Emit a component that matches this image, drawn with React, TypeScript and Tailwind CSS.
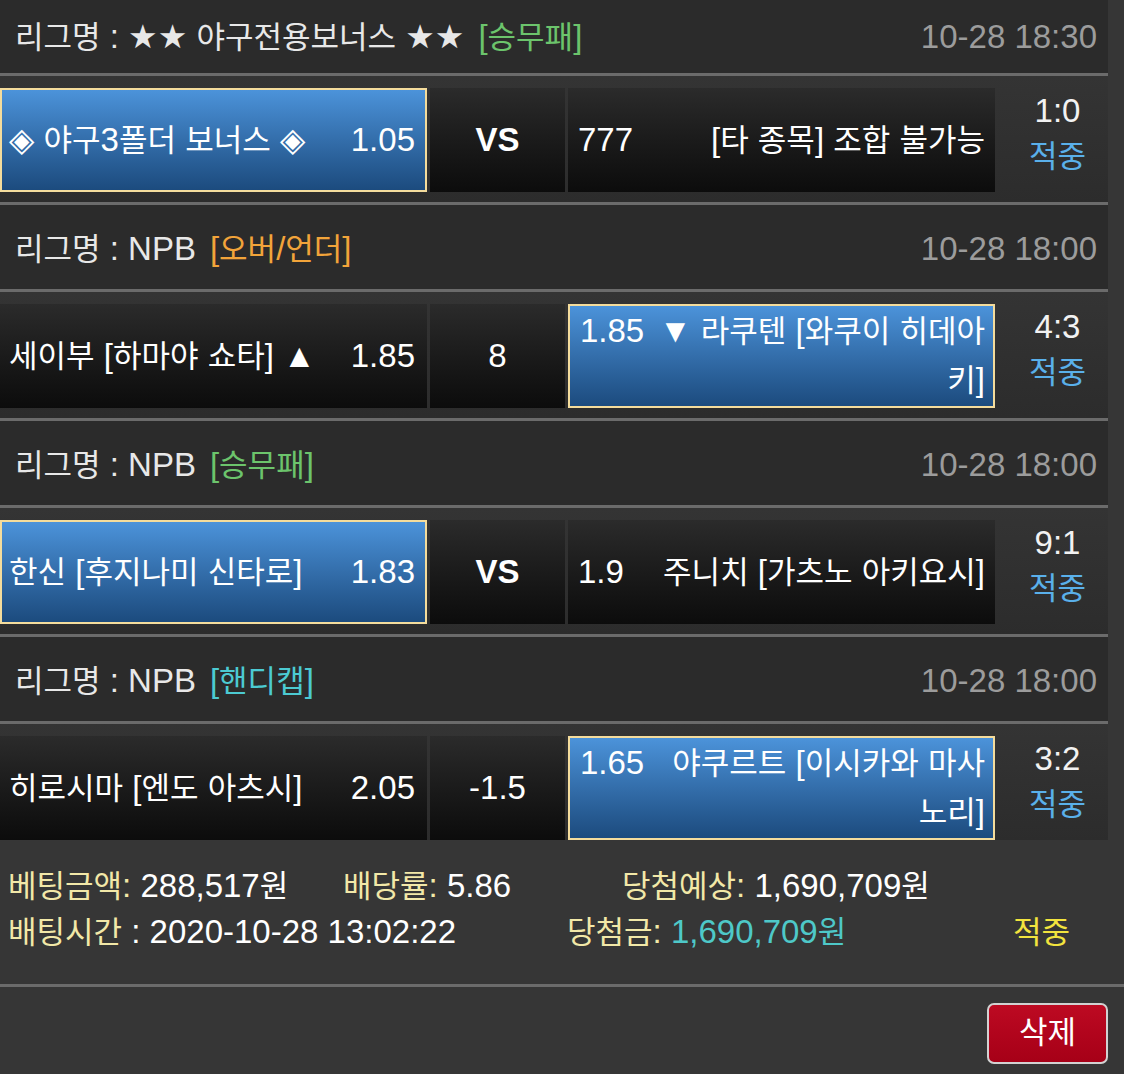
import React from 'react';

interface Game {
    league: string;
    tag: string;
    tagColor: string;
    date: string;
    home: string;
    homeOdds: string;
    mid: string;
    awayOdds: string;
    away: string[];
    pick: 'home' | 'away';
    score: string;
}

const games: Game[] = [
    {
        league: '★★ 야구전용보너스 ★★',
        tag: '[승무패]',
        tagColor: 'text-[#6cc46c]',
        date: '10-28 18:30',
        home: '◈ 야구3폴더 보너스 ◈',
        homeOdds: '1.05',
        mid: 'VS',
        awayOdds: '777',
        away: ['[타 종목] 조합 불가능'],
        pick: 'home',
        score: '1:0'
    },
    {
        league: 'NPB',
        tag: '[오버/언더]',
        tagColor: 'text-[#f2a43a]',
        date: '10-28 18:00',
        home: '세이부 [하마야 쇼타] ▲',
        homeOdds: '1.85',
        mid: '8',
        awayOdds: '1.85',
        away: ['▼ 라쿠텐 [와쿠이 히데아', '키]'],
        pick: 'away',
        score: '4:3'
    },
    {
        league: 'NPB',
        tag: '[승무패]',
        tagColor: 'text-[#6cc46c]',
        date: '10-28 18:00',
        home: '한신 [후지나미 신타로]',
        homeOdds: '1.83',
        mid: 'VS',
        awayOdds: '1.9',
        away: ['주니치 [가츠노 아키요시]'],
        pick: 'home',
        score: '9:1'
    },
    {
        league: 'NPB',
        tag: '[핸디캡]',
        tagColor: 'text-[#4ccad2]',
        date: '10-28 18:00',
        home: '히로시마 [엔도 아츠시]',
        homeOdds: '2.05',
        mid: '-1.5',
        awayOdds: '1.65',
        away: ['야쿠르트 [이시카와 마사', '노리]'],
        pick: 'away',
        score: '3:2'
    }
];

// hangul glyphs run a little smaller than the latin text around them
function Txt({s}: {s: string}) {
    const parts = s.split(/([\uAC00-\uD7A3]+)/);
    return (
        <>
            {parts.map((p, i) =>
                /[\uAC00-\uD7A3]/.test(p) ? (
                    <span key={i} className="text-[31px]">{p}</span>
                ) : (
                    <React.Fragment key={i}>{p}</React.Fragment>
                )
            )}
        </>
    );
}

const blueCell = 'border-2 border-[#f4dc9c] bg-linear-to-b from-[#4c93da] to-[#1c4b7e]';
const darkCell = 'bg-linear-to-b from-[#2b2b2b] to-[#0c0c0c]';

function Sep() {
    return <div className="h-[3px] bg-[#6b6b6b]"/>;
}

function GameBlock({game, first, last}: {game: Game; first: boolean; last: boolean}) {
    const homePicked = game.pick === 'home';
    return (
        <>
            <div
                className={`flex items-center justify-between bg-[#2b2b2b] pl-[15px] pr-[11px] ${
                    first ? 'h-[73px]' : 'h-[84px] pt-[4px]'
                }`}
            >
                <div className="text-[#e8e8e8]">
                    <Txt s={`리그명 : ${game.league}`}/>
                    <span className={`ml-[14px] ${game.tagColor}`}>
                        <Txt s={game.tag}/>
                    </span>
                </div>
                <div className="text-[#9c9c9c]">{game.date}</div>
            </div>
            <Sep/>
            <div
                className={`flex bg-linear-to-b from-[#343434] to-[#2c2c2c] pt-[12px] ${
                    last ? '' : 'pb-[10px]'
                }`}
            >
                <div
                    className={`flex h-[104px] w-[427px] items-center justify-between ${
                        homePicked ? `${blueCell} pl-[7px] pr-[10px]` : `${darkCell} pl-[9px] pr-[12px]`
                    }`}
                >
                    <span><Txt s={game.home}/></span>
                    <span>{game.homeOdds}</span>
                </div>
                <div
                    className={`ml-[3px] flex h-[104px] w-[135px] items-center justify-center ${darkCell} ${
                        game.mid === 'VS' ? 'font-bold' : ''
                    }`}
                >
                    {game.mid}
                </div>
                <div
                    className={`ml-[3px] flex h-[104px] w-[427px] items-center ${
                        homePicked ? `${darkCell} px-[10px]` : `${blueCell} pl-[10px] pr-[8px]`
                    }`}
                >
                    <div className="w-full text-right leading-[48px]">
                        <span className="float-left mr-[10px]">{game.awayOdds}</span>
                        {game.away.map((line, i) => (
                            <React.Fragment key={i}>
                                {i > 0 && <br/>}
                                <Txt s={line}/>
                            </React.Fragment>
                        ))}
                    </div>
                </div>
                <div
                    className="flex h-[104px] flex-1 flex-col items-center justify-center pb-[14px] pl-[12px] leading-[45px]">
                    <span className="text-[#f2f2f2]">{game.score}</span>
                    <span className="text-[#5ab0ea]"><Txt s="적중"/></span>
                </div>
            </div>
            {!last && <Sep/>}
        </>
    );
}

export default function App() {
    return (
        <div
            className="min-h-screen bg-[#363636] font-['Liberation_Sans','DejaVu_Sans','Noto_Sans_CJK_KR',sans-serif] text-[33px] text-white">
            <div className="w-[1108px]">
                {games.map((g, i) => (
                    <GameBlock key={i} game={g} first={i === 0} last={i === games.length - 1}/>
                ))}
            </div>

            <div className="pl-[8px] pt-[23px] pb-[29px] leading-[45px]">
                <div className="flex">
                    <div className="w-[335px]">
                        <span className="text-[#f2e8a8]"><Txt s="베팅금액:"/></span> <Txt s="288,517원"/>
                    </div>
                    <div className="w-[279px]">
                        <span className="text-[#f2e8a8]"><Txt s="배당률:"/></span> 5.86
                    </div>
                    <div>
                        <span className="text-[#f2e8a8]"><Txt s="당첨예상:"/></span> <Txt s="1,690,709원"/>
                    </div>
                </div>
                <div className="flex">
                    <div className="w-[559px]">
                        <span className="text-[#f2e8a8]"><Txt s="배팅시간"/></span> : 2020-10-28 13:02:22
                    </div>
                    <div className="w-[446px]">
                        <span className="text-[#f2e8a8]"><Txt s="당첨금:"/></span>{' '}
                        <span className="text-[#4ec8c8]"><Txt s="1,690,709원"/></span>
                    </div>
                    <div className="text-[#f2e43e]"><Txt s="적중"/></div>
                </div>
            </div>

            <Sep/>

            <div className="flex justify-end pt-[16px] pr-[16px]">
                <button
                    className="flex h-[61px] w-[121px] items-center justify-center rounded-[7px] border-2 border-[#d2d2d2] bg-linear-to-b from-[#bd0a22] to-[#a60017] text-white">
                    <Txt s="삭제"/>
                </button>
            </div>
        </div>
    );
}
